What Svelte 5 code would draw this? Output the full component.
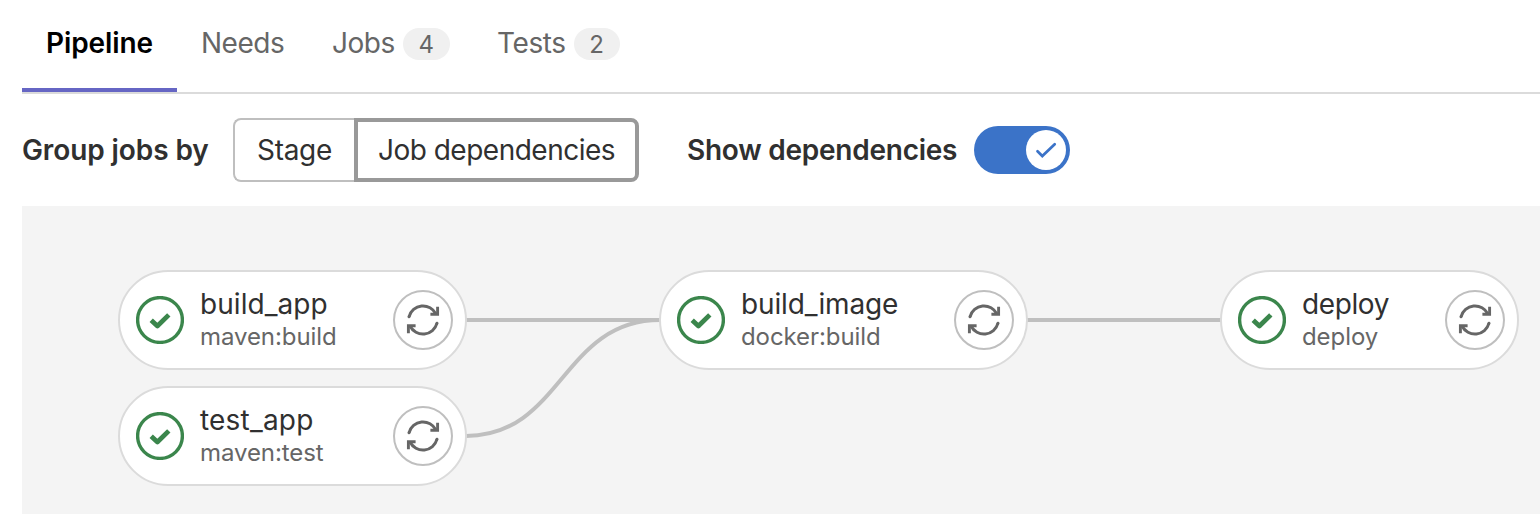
<script>
  const tabs = [
    { label: 'Pipeline', width: 155, spacing: -0.1, active: true },
    { label: 'Needs', width: 131, spacing: -0.5 },
    { label: 'Jobs', width: 165, spacing: -0.5, count: 4, badge: 47 },
    { label: 'Tests', width: 170, spacing: -0.4, count: 2, badge: 46 }
  ];
  const columns = [
    { width: 349, jobs: [['build_app', 'maven:build', 0.05], ['test_app', 'maven:test', 0.2]] },
    { width: 369, jobs: [['build_image', 'docker:build', -0.12]] },
    { width: 299, jobs: [['deploy', 'deploy', -0.4]] }
  ];
</script>

<div class="page">
  <nav class="tabs">
    {#each tabs as tab}
      <a class="tab" class:active={tab.active} style:width="{tab.width}px">
        <span style:letter-spacing="{tab.spacing}px">{tab.label}</span>
        {#if tab.count}<span class="badge" style:width="{tab.badge}px">{tab.count}</span>{/if}
      </a>
    {/each}
  </nav>

  <div class="controls">
    <span class="caption group">Group jobs by</span>
    <div class="segmented">
      <button class="stage"><span>Stage</span></button>
      <button class="selected"><span>Job dependencies</span></button>
    </div>
    <span class="caption show">Show dependencies</span>
    <button class="toggle" aria-label="Show dependencies">
      <span class="knob">
        <svg width="40" height="40" viewBox="0 0 40 40"><path d="M11.5 21.2 16.3 26 28.7 14.2" fill="none" stroke="#3b73c8" stroke-width="2.7" stroke-linecap="round" /></svg>
      </span>
    </button>
  </div>

  <div class="graph">
    <svg class="links" width="1518" height="308" viewBox="0 0 1518 308">
      <path d="M444 114H638" />
      <path d="M444 230C540 230 540 114 638 114" />
      <path d="M1005 114H1199" />
    </svg>
    {#each columns as column}
      <div class="column" style:width="{column.width}px">
        {#each column.jobs as [name, stage, spacing]}
          <div class="job">
            <svg class="status" width="48" height="48" viewBox="0 0 48 48" fill="none" stroke="#3b864c">
              <circle cx="24" cy="24" r="22.4" stroke-width="3.4" />
              <path d="M15.2 24.2 21.4 30 32.8 18.9" stroke-width="4.8" stroke-linejoin="round" />
            </svg>
            <div class="text">
              <span class="name" style:letter-spacing="{spacing}px">{name}</span>
              <span class="sub">{stage}</span>
            </div>
            <button class="retry" aria-label="Run again">
              <svg width="40" height="40" viewBox="-20 -20 40 40" fill="none" stroke="#666" stroke-width="2.9">
                <path d="M-14-3.2A14.5 14.5 0 0 1 13-6M14 3.2A14.5 14.5 0 0 1-13 6" />
                <path d="M-14-3.2A14.5 14.5 0 0 1-13.9-3.5M14 3.2A14.5 14.5 0 0 1 13.9 3.5" stroke-linecap="round" />
                <path d="M7.4-5.8H14.6V-13.2M-7.4 5.8H-14.6V13.2" />
              </svg>
            </button>
          </div>
        {/each}
      </div>
    {/each}
  </div>
</div>

<style>
  :global(body) { background: #fff; }
  * { box-sizing: border-box; }
  .page {
    width: 1540px; height: 514px; padding-left: 22px; overflow: hidden;
    display: flex; flex-direction: column; background: #fff;
    font-family: Inter, sans-serif; font-size: 28px; line-height: 32px; color: #303030;
  }
  button { margin: 0; padding: 0; font: inherit; color: inherit; background: #fff; }
  span { white-space: nowrap; }
  .tabs { display: flex; height: 94px; flex: none; border-bottom: 2px solid #dbdbdb; }
  .tab {
    display: flex; align-items: flex-start; gap: 8px;
    padding: 27px 0 0 24px; height: 92px; color: #666;
  }
  .tab.active { color: #000; font-weight: 600; border-bottom: 4px solid #6666c4; }
  .badge {
    display: flex; justify-content: center; height: 32px; margin-top: 1px;
    border-radius: 16px; background: #f0f0f0; font-size: 24px; line-height: 33px;
  }
  .controls { display: flex; align-items: center; height: 112px; flex: none; }
  .caption { font-weight: 600; }
  .group { width: 211px; letter-spacing: -0.1px; }
  .show { width: 287px; margin-left: 48px; letter-spacing: -0.25px; }
  .segmented { display: flex; height: 64px; }
  .stage {
    width: 121px; border: 2px solid #bfbfbf; border-right: 0; border-radius: 8px 0 0 8px;
    letter-spacing: -0.3px;
  }
  .selected {
    width: 285px; border: 4px solid #999; border-radius: 0 8px 8px 0; letter-spacing: -0.5px;
  }
  .toggle {
    display: flex; align-items: center; justify-content: flex-end;
    width: 96px; height: 48px; padding-right: 4px; border: 0; border-radius: 24px; background: #3b73c8;
  }
  .knob { width: 40px; height: 40px; border-radius: 50%; background: #fff; }
  .knob svg, .retry svg { display: block; }
  .graph {
    position: relative; display: flex; align-items: flex-start; gap: 192px;
    height: 308px; padding: 64px 0 0 96px; background: #f4f4f4;
  }
  .links { position: absolute; left: 0; top: 0; fill: none; stroke: #bfbfbf; stroke-width: 4; }
  .column { position: relative; display: flex; flex: none; flex-direction: column; gap: 16px; }
  .job {
    display: flex; align-items: center; height: 100px; padding: 0 12px 0 16px;
    border: 2px solid #dbdbdb; border-radius: 50px; background: #fff;
  }
  .status { flex: none; margin-right: 16px; }
  .text { display: flex; flex: 1; flex-direction: column; }
  .name { line-height: 32px; padding-bottom: 2px; }
  .sub { font-size: 24px; line-height: 30px; color: #666; letter-spacing: -0.08px; }
  .retry {
    display: flex; align-items: center; justify-content: center; flex: none;
    width: 60px; height: 60px; border: 2px solid #bfbfbf; border-radius: 50%;
  }
</style>
